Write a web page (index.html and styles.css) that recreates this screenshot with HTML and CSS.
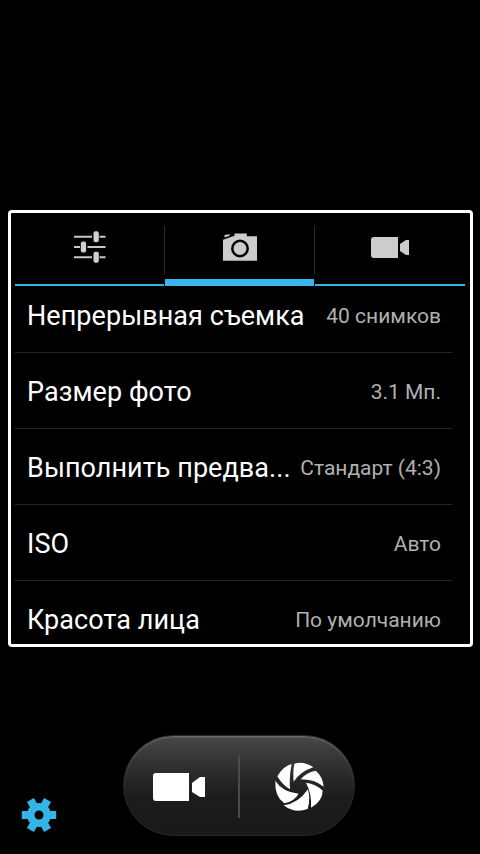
FILE: index.html
```html
<!DOCTYPE html>
<html lang="ru">
<head>
<meta charset="utf-8">
<title>Камера</title>
<link rel="stylesheet" href="styles.css">
</head>
<body>
<main class="screen">
  <section class="panel">
    <nav class="tabs">
      <div class="tab">
        <svg class="icon" width="150" height="66" viewBox="0 0 150 66">
          <path d="M59 23.700h18M84.500 23.700h6M59 34h6M72.500 34h18M59 44.200h18M84.500 44.200h6" stroke="#c8c8c8" stroke-width="2"/>
          <g fill="#d0d0d0"><rect x="78.500" y="18.200" width="5.300" height="11" rx="2"/><rect x="65.800" y="28.500" width="5.300" height="11" rx="2"/><rect x="78.500" y="38.700" width="5.300" height="11" rx="2"/></g>
        </svg>
      </div>
      <div class="tab active">
        <svg class="icon" width="150" height="66" viewBox="0 0 150 66">
          <path d="M58 26.800 69.500 22.800V20.500H81.800V23.300H92V47.800H58ZM59.500 22l5.200-.8v1.600l-5.200 1.800Z" fill="#ccc"/>
          <circle cx="75" cy="35.500" r="7.700" fill="#ccc" stroke="#000" stroke-width="2.500"/>
        </svg>
      </div>
      <div class="tab">
        <svg class="icon" width="150" height="66" viewBox="0 0 150 66">
          <path d="M59 24H83V45H59Q56 45 56 42V27Q56 24 59 24ZM85 31 91 27H94V42H91L85 38Z" fill="#ccc"/>
        </svg>
      </div>
    </nav>
    <div class="list">
      <div class="row"><span class="name">Непрерывная съемка</span><span class="value">40 снимков</span></div>
      <div class="row"><span class="name">Размер фото</span><span class="value">3.1 Мп.</span></div>
      <div class="row"><span class="name">Выполнить предва...</span><span class="value">Стандарт (4:3)</span></div>
      <div class="row"><span class="name">ISO</span><span class="value">Авто</span></div>
      <div class="row"><span class="name">Красота лица</span><span class="value">По умолчанию</span></div>
    </div>
  </section>
  <footer class="footer">
    <svg class="gear" width="36" height="36" viewBox="-18 -18 36 36">
      <g fill="#33b5e5">
        <path d="M-17.200-4H17.200V4H-17.200Z"/>
        <path d="M-17.200-4H17.200V4H-17.200Z" transform="rotate(60)"/>
        <path d="M-17.200-4H17.200V4H-17.200Z" transform="rotate(120)"/>
        <circle r="12"/>
      </g>
      <circle r="4.500" fill="#000"/>
    </svg>
    <div class="controls">
      <svg class="video" width="54" height="30" viewBox="0 0 54 30">
        <path d="M4 1H37V29H4Q1 29 1 26V4Q1 1 4 1ZM40 11 48 5H53V25H48L40 20Z" fill="#fff"/>
      </svg>
      <i class="divider"></i>
      <svg class="shutter" width="50" height="50" viewBox="118 112 150 150">
        <g fill="#fff">
          <path d="M171 118Q147 123 128 155Q142 180 166 194Q163 160 171 118Z"/>
          <path d="M179 117Q207 108 236 128Q198 140 177 171Q174 140 179 117Z"/>
          <path d="M198 164Q213 144 243 138Q264 155 267 186Q240 164 198 164Z"/>
          <path d="M214 174Q245 178 264 198Q264 229 229 249Q232 208 214 174Z"/>
          <path d="M220 194Q228 222 219 253Q180 268 147 242Q190 237 220 194Z"/>
          <path d="M122 169Q145 203 192 207Q178 231 149 236Q119 216 122 169Z"/>
        </g>
      </svg>
    </div>
  </footer>
</main>
</body>
</html>
```
FILE: styles.css
```css
* { box-sizing: border-box; }
body { margin: 0; background: #000; font-family: Roboto, "Noto Sans", sans-serif; }
.screen { width: 480px; height: 854px; padding: 210px 7px 0 8px; background: #000; overflow: hidden; display: flex; flex-direction: column; }
.panel { height: 437px; flex: none; border: 3px solid #fff; border-radius: 4px; padding: 0 5px 0 4px; overflow: hidden; }
.tabs { display: grid; grid-template-columns: 150px 150px 150px; height: 73px; }
.tab { position: relative; display: flex; flex-direction: column; justify-content: space-between; }
.tab::after { content: ""; height: 2px; background: #33b5e5; margin-right: 1px; }
.tab.active::after { height: 7px; background: #3ab6ef; }
.tab:last-child::after { margin-right: 0; }
.tab:not(:last-child)::before { content: ""; position: absolute; right: 0; top: 13px; width: 1px; height: 48px; background: #2a2a2a; }
.icon { display: block; flex: none; }
.list { width: 438px; margin-top: -9px; }
.row { height: 76px; padding: 2px 12px 0 12px; display: flex; align-items: center; justify-content: space-between; border-bottom: 1px solid #242424; white-space: nowrap; }
.name { font-size: 27px; line-height: 32px; letter-spacing: 0.06px; color: #fff; }
.value { font-size: 21px; line-height: 26px; color: #b0b0b0; }
.footer { display: flex; margin-top: 88px; padding-left: 13px; }
.gear { margin-top: 62px; }
.controls { width: 232px; height: 101px; margin-left: 66px; border-radius: 51px; background: linear-gradient(#484848, #303030 30%, #1c1c1c 62%, #191919); border: 1px solid #292929; box-shadow: inset 0 2px 2px -1px #777; display: flex; align-items: center; padding: 2px 28px 0; }
.divider { width: 2px; height: 63px; margin-left: 32px; background: #4b4b4b; }
.shutter { margin-left: 34px; }
```
